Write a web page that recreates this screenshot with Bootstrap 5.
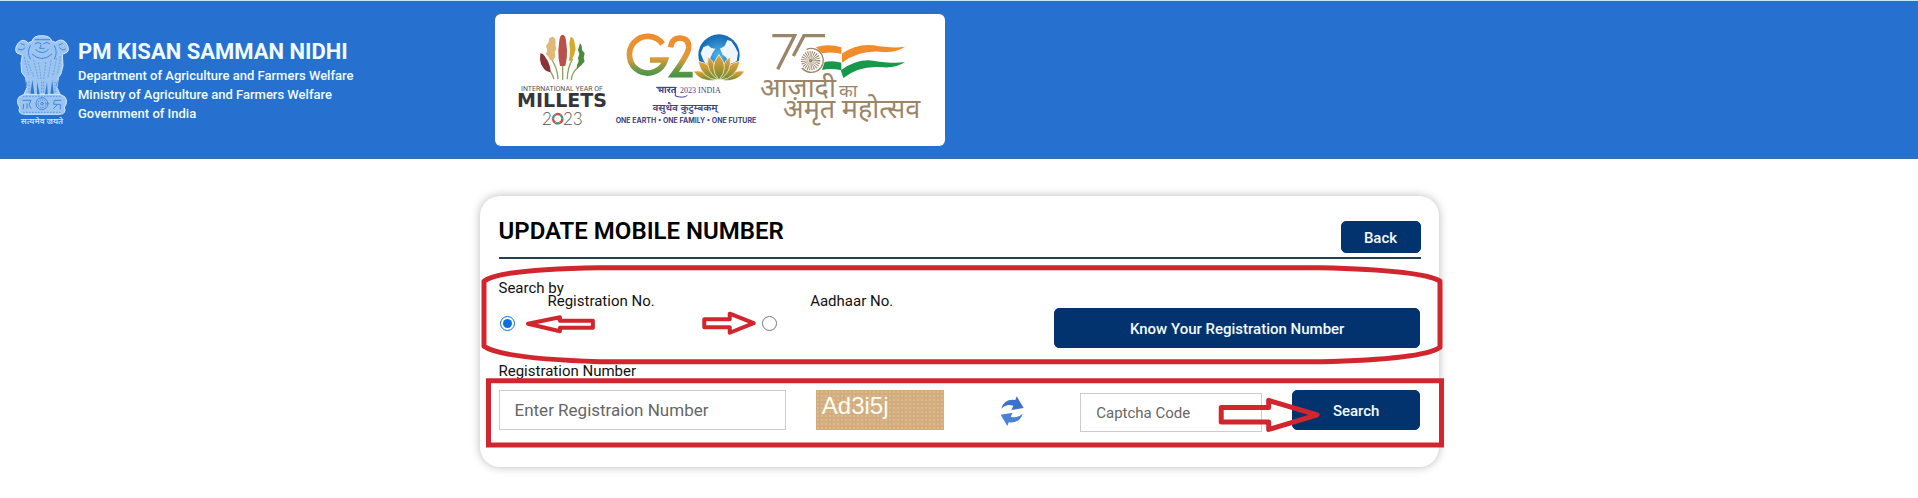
<!DOCTYPE html>
<html lang="en">
<head>
<meta charset="utf-8">
<meta name="viewport" content="width=device-width, initial-scale=1">
<title>PM Kisan Samman Nidhi - Update Mobile Number</title>
<link href="https://cdn.jsdelivr.net/npm/bootstrap@5.3.0/dist/css/bootstrap.min.css" rel="stylesheet">
<style>
  body { font-family: Roboto, "Noto Sans", sans-serif; color: #111; font-size: 15px; background: #fff; }
  .site-header { background: #2671d0; border-top: 1px solid #c4e6f7; border-bottom: 1px solid #3a6fae; padding: 13px 0 12px; color: #f0fbff; }
  .row { --bs-gutter-x: 30px; }
  .brand-block { gap: 9px; }
  .brand-title { font-size: 22px; font-weight: 700; line-height: 28px; margin: 0; }
  .brand-line { font-size: 13px; font-weight: 500; line-height: 19px; margin: 0; }
  .logo-panel { background: #fff; border-radius: 6px; width: 450px; max-width: 100%; }
  .logo-panel svg { display: block; width: 100%; height: auto; }
  .form-card { border-radius: 20px; box-shadow: 0 0 10px rgba(0,0,0,.28); margin: 37px 0 24px; padding: 25px 3px 34px 4px; background: #fff; }
  .card-head { border-bottom: 2px solid #24404f; padding-bottom: 4px; }
  .card-head h1 { font-size: 24px; font-weight: 600; line-height: 20px; color: #000; }
  .btn-navy { --bs-btn-bg: #02336e; --bs-btn-border-color: #02336e; --bs-btn-color: #f4fbff; --bs-btn-hover-bg: #02285a; --bs-btn-hover-color: #fff; font-size: 15px; font-weight: 500; line-height: 20px; border-radius: 5px; height: 40px; padding: 2px 12px 0; }
  .btn-back { width: 80px; height: 32px; }
  .tight-text { font-size: 15px; line-height: 13px; }
  .search-by { padding-top: 23px; }
  .choice { flex: 0 0 50%; }
  .choice label { padding-left: 49px; }
  .choice input { appearance: auto; width: 15px; height: 15px; margin: 0 0 0 1px; accent-color: #0b6fe0; }
  .know-row { padding-top: 49px; }
  .number-label { font-size: 15px; line-height: 18px; margin: 14px 0 10px; }
  .field { border: 1px solid #ccc; border-radius: 0; height: 40px; padding: 0 15px; font-size: 17px; }
  .field::placeholder { color: #666; opacity: 1; }
  .field-code { height: 39px; margin-top: 3px; font-size: 15px; }
  .captcha { height: 40px; background-color: #d2ae80; background-image: radial-gradient(#dcba8c 25%, transparent 26%), radial-gradient(#caa678 25%, transparent 26%); background-size: 4px 4px, 3px 3px; background-position: 0 0, 2px 2px; color: #fffdf2; font: 24px/32px "Liberation Sans", sans-serif; padding-left: 6px; }
  .refresh { border: 0; background: none; padding: 0; margin-top: 6px; }
  .marks { top: 0; left: 0; width: 100%; height: 100%; overflow: visible; pointer-events: none; }
</style>
</head>
<body>
<header class="site-header">
  <div class="row mx-0">
    <div class="col-3 d-flex align-items-center brand-block">
      <svg width="54" height="90" viewBox="0 0 162 270" class="flex-shrink-0" role="img" aria-label="State Emblem of India">
        <g fill="#9cc4f1" stroke="#d3eaff" stroke-width="3">
          <path d="M52 18Q54 2 80 2T110 18L122 22Q138 8 152 22Q166 42 156 52L142 58 144 92 138 116 130 128 126 158 136 180 26 180 36 158 32 128 20 112 18 84 22 60 6 54Q-4 42 10 24Q24 8 40 24Z"/>
          <path d="M32 178Q4 182 8 204Q10 214 14 216Q6 238 30 238H132Q156 238 148 216Q152 214 154 204Q158 182 130 178Z"/>
        </g>
        <g fill="#2f77d0">
          <path d="M52 134L58 176H46ZM66 140L74 178H66ZM96 140L90 178H98ZM112 134L106 176H116ZM33 134l4 14-2 12zM128 134l-4 14 2 12z"/>
        </g>
        <g fill="none" stroke="#4486d8" stroke-width="3" stroke-linecap="round">
          <path d="M60 14h44M60 26q10-8 18 0M86 26q10-8 18 0M62 44q20 18 38 0M78 30l-4 10h14M10 42q12 8 20-4M134 38q8 12 18 4M18 26l10 4M142 26l-10 4M52 58q28 26 58 0"/>
          <path d="M46 32q-12 20 0 40M118 32q12 20 0 40"/>
          <circle cx="81" cy="206" r="18"/><circle cx="81" cy="206" r="12" stroke-dasharray="2 5"/><circle cx="81" cy="206" r="4"/>
          <path d="M24 196h24l-6 14 6 10M26 208l-2 14M36 206v14M138 196h-20l-2 12h20v14M116 220l10-10"/>
        </g>
        <g fill="none" stroke="#5b9ae2" stroke-width="3" stroke-dasharray="5 4">
          <path d="M28 66q6 30 14 54M38 78q8 24 18 46M56 76q6 26 14 54M70 82q6 28 8 50M92 82q-2 28-6 50M108 76q-4 30-10 54M124 70q-4 30-12 54M136 64q-4 30-10 54"/>
          <path d="M24 184h114M24 232h114M42 140v34M80 140v36M86 140v36M120 140v34"/>
        </g>
        <text x="81" y="266" text-anchor="middle" font-size="25" font-weight="600" fill="#c6e1fb">सत्यमेव जयते</text>
      </svg>
      <div>
        <p class="brand-title">PM KISAN SAMMAN NIDHI</p>
        <p class="brand-line">Department of Agriculture and Farmers Welfare</p>
        <p class="brand-line">Ministry of Agriculture and Farmers Welfare</p>
        <p class="brand-line">Government of India</p>
      </div>
    </div>
    <div class="col-9">
      <div class="logo-panel">
        <svg viewBox="0 0 450 132" role="img" aria-label="International Year of Millets 2023, G20, Azadi Ka Amrit Mahotsav">
          <defs>
            <linearGradient id="tri" gradientUnits="userSpaceOnUse" x1="0" y1="105" x2="0" y2="235"><stop offset="0" stop-color="#f08c2e"/><stop offset=".55" stop-color="#dd9a3a"/><stop offset=".8" stop-color="#6a9a48"/><stop offset="1" stop-color="#3f8f46"/></linearGradient>
            <linearGradient id="petal" x1="0" y1="0" x2="0" y2="1"><stop offset="0" stop-color="#f2a23a"/><stop offset="1" stop-color="#6b8a2c"/></linearGradient>
            <radialGradient id="globe"><stop offset="0" stop-color="#4fb5ea"/><stop offset="1" stop-color="#1467b4"/></radialGradient>
          </defs>
          <!-- Year of Millets -->
          <g transform="translate(-5 -14) scale(.33333)">
            <g fill="none" stroke="#8aa35c" stroke-width="4" stroke-linecap="round">
              <path d="M218 185V238M186 180Q202 205 204 236M174 208Q188 220 191 236M247 178Q232 205 232 236M266 200Q246 216 244 238"/>
            </g>
            <path fill="#b9504a" d="M218 104Q226 104 228 122L231 150Q232 176 226 198H210Q204 176 205 150L208 122Q210 104 218 104Z"/>
            <path fill="#e2b878" d="M188 110Q200 114 196 134L199 146 194 156 196 168 190 182 180 180 176 172 168 162 172 150 168 138 176 126 178 114Z"/>
            <path fill="#8b3239" d="M151 160Q160 160 166 172L174 184 180 200 182 216Q168 216 160 204L153 192 150 178Z"/>
            <path fill="#d6aa2e" d="M242 110Q252 112 254 130L257 148 252 166 244 182H236Q240 168 240 152L238 130Z"/>
            <path fill="#4c8a3e" d="M270 130Q276 134 276 150L284 160 281 174 284 184 274 196 260 206Q260 194 266 184L264 174 268 162 264 150Z"/>
            <circle cx="203" cy="356" r="14" fill="none" stroke="#d94b35" stroke-width="7" stroke-dasharray="15 14"/>
            <circle cx="203" cy="356" r="14" fill="none" stroke="#3f8f8b" stroke-width="7" stroke-dasharray="14 15" stroke-dashoffset="-15"/>
          </g>
          <text x="67" y="77" text-anchor="middle" font-family="Roboto" font-size="7" fill="#555">INTERNATIONAL YEAR OF</text>
          <text x="67" y="93" text-anchor="middle" font-family="DejaVu Sans" font-weight="700" font-size="19" fill="#35353a">MILLETS</text>
          <g font-family="Lato" font-weight="300" font-size="17" fill="#555"><text x="47" y="111">2</text><text x="68" y="111">23</text></g>
          <!-- G20 -->
          <g transform="translate(-5 -14) scale(.33333)">
            <path d="M518 132A55 55 0 1 0 526 180H480" fill="none" stroke="url(#tri)" stroke-width="17"/>
            <path d="M542 142Q546 114 570 114Q598 116 596 144Q594 164 550 224H608" fill="none" stroke="url(#tri)" stroke-width="17"/>
            <circle cx="687" cy="165" r="62" fill="url(#globe)"/>
            <path fill="#eef6fb" d="M632 160L640 142 654 136 664 144 676 146 668 158 660 176 648 194 640 180ZM690 146L704 138 712 120 724 124 736 142 744 158 740 184 720 192 708 172 698 164Z"/>
            <g fill="url(#petal)" stroke="#fff" stroke-width="2">
              <path d="M610 214Q640 206 676 240Q632 248 610 214ZM764 214Q734 206 698 240Q742 248 764 214Z"/>
              <path d="M624 184Q664 188 682 240Q636 236 624 184ZM750 184Q710 188 692 240Q738 236 750 184Z"/>
              <path d="M654 170Q680 190 686 240Q646 216 654 170ZM720 170Q694 190 688 240Q728 216 720 170Z"/>
              <path d="M687 164Q720 202 687 240Q654 202 687 164Z"/>
            </g>
            <path d="M498 262H558M556 262V288Q582 296 592 286" fill="none" stroke="#3d4389" stroke-width="3"/>
          </g>
          <g fill="#3d4389">
            <text x="162" y="79" font-size="9" font-weight="700">भारत</text>
            <text x="185" y="79" font-family="Liberation Serif" font-size="8">2023 INDIA</text>
            <text x="190" y="97" text-anchor="middle" font-size="10" font-weight="600">वसुधैव कुटुम्बकम्</text>
            <text x="191" y="109" text-anchor="middle" font-family="Inter" font-size="7" font-weight="700">ONE EARTH • ONE FAMILY • ONE FUTURE</text>
          </g>
          <!-- Azadi Ka Amrit Mahotsav -->
          <g transform="translate(245 -4) scale(.33333)">
            <path d="M97 77H164L113 178M255 77H192L160 138" fill="none" stroke="#9a8568" stroke-width="10"/>
            <path fill="#f28c28" d="M228 112Q262 100 304 112V132Q350 100 400 106Q460 116 495 110Q470 128 430 126Q360 118 306 158V132Q280 124 246 130Z"/>
            <path fill="#17984a" d="M254 156Q280 150 304 158V180Q350 146 400 152Q460 162 495 156Q470 174 430 172Q360 164 310 204L302 180Q270 174 246 180Z"/>
            <circle cx="214" cy="152" r="38" fill="#fff"/>
            <path d="M200 118A36 36 0 1 1 186 174" fill="none" stroke="#9a8568" stroke-width="4"/>
            <circle cx="212" cy="152" r="16" fill="none" stroke="#9a8568" stroke-width="26" stroke-dasharray="2 2.2"/>
            <circle cx="212" cy="152" r="5" fill="#9a8568"/>
          </g>
          <g fill="#9a8568">
            <text x="265" y="83" font-size="27">आज़ादी</text>
            <text x="344" y="83" font-size="18">का</text>
            <text x="288" y="104" font-size="27">अमृत महोत्सव</text>
          </g>
        </svg>
      </div>
    </div>
  </div>
</header>

<main class="row mx-0 justify-content-center">
  <div class="col-6 px-0">
    <form class="form-card position-relative">
      <div class="row mx-0"><div class="col-12">
        <div class="card-head d-flex justify-content-between">
          <h1 class="mb-0">UPDATE MOBILE NUMBER</h1>
          <button type="button" class="btn btn-navy btn-back">Back</button>
        </div>
      </div></div>
      <div class="row mx-0">
        <fieldset class="col-7 search-by">
          <legend class="tight-text mb-0">Search by</legend>
          <div class="d-flex">
            <div class="choice"><label class="tight-text d-block mb-2" for="byReg">Registration No.</label><input class="d-block" type="radio" name="by" id="byReg" checked></div>
            <div class="choice"><label class="tight-text d-block mb-2" for="byAadhaar">Aadhaar No.</label><input class="d-block" type="radio" name="by" id="byAadhaar"></div>
          </div>
        </fieldset>
        <div class="col-5 know-row"><button type="button" class="btn btn-navy w-100">Know Your Registration Number</button></div>
      </div>
      <div class="row mx-0"><div class="col-12"><label class="number-label d-block" for="regNo">Registration Number</label></div></div>
      <div class="row mx-0">
        <div class="col-4"><input id="regNo" type="text" class="form-control field" placeholder="Enter Registraion Number"></div>
        <div class="col-2"><div class="captcha">Ad3i5j</div></div>
        <div class="col-4 px-0"><div class="row mx-0">
          <div class="col-4 text-center px-0">
            <button type="button" class="refresh" aria-label="Refresh captcha">
              <svg class="d-block" width="24" height="30" viewBox="0 0 72 90">
                <path fill="#3b72cc" d="M4 38Q12 8 46 12L50 1 71 36 34 42 40 29Q20 22 4 38Z"/>
                <path fill="#4a80d6" d="M68 53Q60 82 26 79L22 90 2 56 38 50 32 62Q52 68 68 53Z"/>
              </svg>
            </button>
          </div>
          <div class="col-8"><input type="text" class="form-control field field-code" placeholder="Captcha Code" aria-label="Captcha Code"></div>
        </div></div>
        <div class="col-2"><button type="submit" class="btn btn-navy w-100">Search</button></div>
      </div>
      <svg class="marks position-absolute" viewBox="480 196 960 270" preserveAspectRatio="none" aria-hidden="true">
        <g fill="none" stroke="#d2262e" stroke-width="5" stroke-linejoin="round">
          <path d="M484 281Q500 269 600 267.500H1321Q1425 270 1441 281V347Q1425 359 1321 361.500H600Q500 358 484 346Z"/>
          <path stroke-linejoin="miter" d="M488.500 380.500H1442.500V444.500H488.500Z"/>
          <path d="M1222 407H1269.500V400L1318 414.500 1269.500 429V421.500H1222Z"/>
          <path stroke-width="4" d="M528 323.500L560 317V320.500H593V327.500H560V331ZM704.500 319H730V313.500L754 323 730 332.500V327H704.500Z"/>
        </g>
      </svg>
    </form>
  </div>
</main>
<script src="https://cdn.jsdelivr.net/npm/bootstrap@5.3.0/dist/js/bootstrap.bundle.min.js"></script>
</body>
</html>
